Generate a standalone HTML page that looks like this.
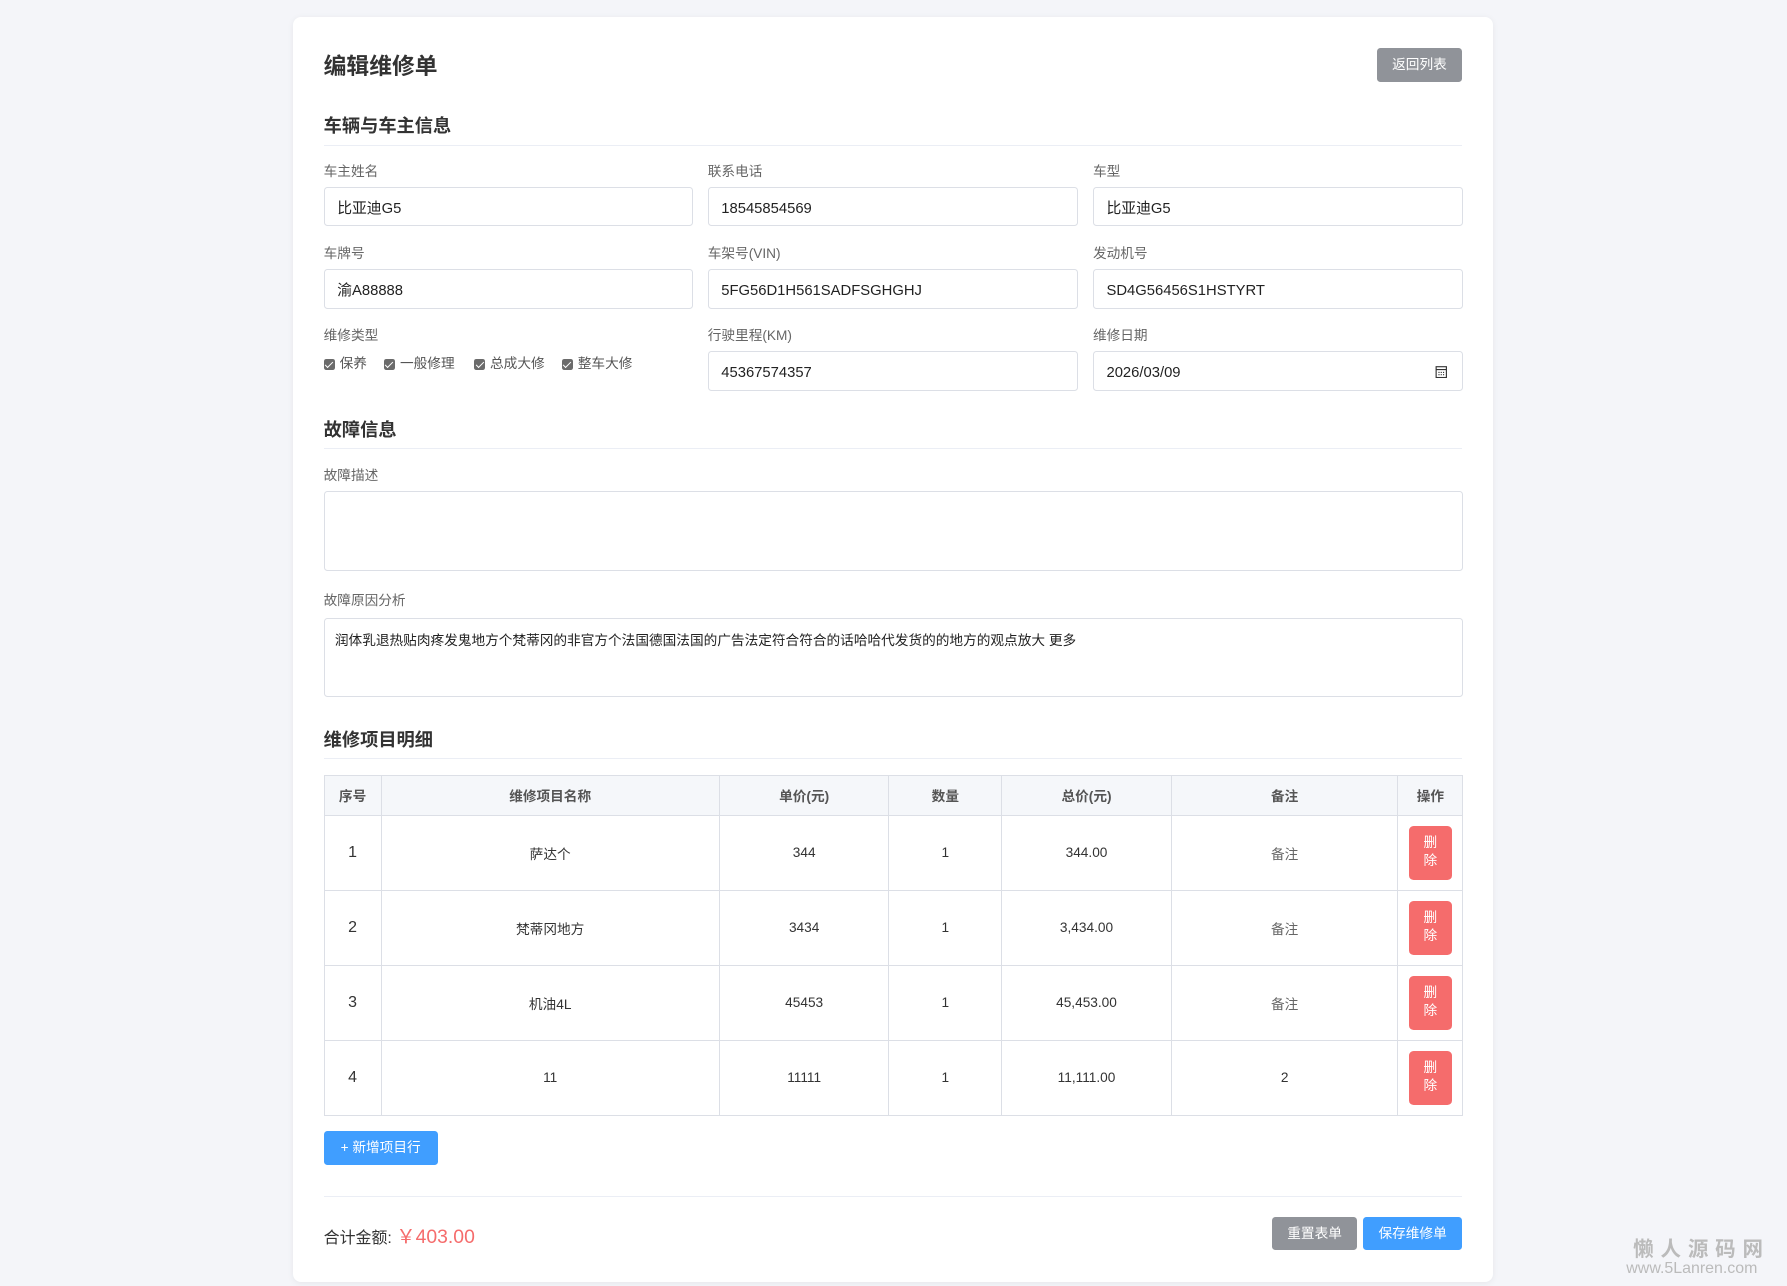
<!DOCTYPE html>
<html><head><meta charset="utf-8">
<style>
html,body{margin:0;padding:0;background:#f4f5f9;}
body{width:1787px;height:1285px;overflow:hidden;font-family:"Liberation Sans","Noto Sans CJK SC",sans-serif;}
#w{zoom:1.13967;position:relative;width:1568px;height:1128px;}
.a{position:absolute;}
.card{left:257px;top:15px;width:1053px;height:1110px;background:#fff;border-radius:7px;box-shadow:0 1px 6px rgba(0,0,0,.06);}
.title{font-size:20px;font-weight:bold;color:#333;}
.h{font-size:16px;font-weight:bold;color:#333;}
.line{height:1px;background:#ebeef5;left:284px;width:999px;}
.lab{font-size:12px;color:#666;}
.inp{height:33px;border:1px solid #dcdfe6;border-radius:3px;font-size:13px;color:#222;line-height:37px;padding-left:11px;box-sizing:content-box;}
.btn{color:#fff;font-size:12px;text-align:center;border-radius:3px;}
.cb{display:inline-block;width:10px;height:10px;background:#6b6b6b;border-radius:2px;vertical-align:-2px;margin-right:4px;position:relative;}
.cb:after{content:"";position:absolute;left:3px;top:1px;width:3px;height:6px;border:solid #fff;border-width:0 1.5px 1.5px 0;transform:rotate(45deg);}
.chk{font-size:12px;color:#555;}
table{border-collapse:collapse;font-size:12px;color:#333;}
td,th{border:1px solid #dcdfe6;text-align:center;padding:0;}
th{background:#f5f7fa;height:34px;color:#555;font-weight:bold;}
td{height:65px;}
.n{font-size:14px;}
.del{display:inline-block;width:38px;height:47px;background:#f56c6c;color:#fff;border-radius:4px;font-size:12px;line-height:16px;padding-top:7px;box-sizing:border-box;vertical-align:middle;}
.ta{border:1px solid #dcdfe6;border-radius:3px;left:284px;width:998px;height:68px;font-size:12px;color:#222;box-sizing:content-box;}
</style></head><body><div id="w">
<div class="a card"></div>
<div class="a title" style="left:284px;top:42px;">编辑维修单</div>
<div class="a btn" style="left:1208px;top:42px;width:75px;height:30px;line-height:30px;background:#909399;">返回列表</div>

<div class="a h" style="left:284px;top:98px;">车辆与车主信息</div>
<div class="a line" style="top:127px;"></div>

<div class="a lab" style="left:284px;top:140px;">车主姓名</div>
<div class="a lab" style="left:621px;top:140px;">联系电话</div>
<div class="a lab" style="left:959px;top:140px;">车型</div>
<div class="a inp" style="left:284px;top:164px;width:311px;">比亚迪G5</div>
<div class="a inp" style="left:621px;top:164px;width:312px;">18545854569</div>
<div class="a inp" style="left:959px;top:164px;width:312px;">比亚迪G5</div>

<div class="a lab" style="left:284px;top:212px;">车牌号</div>
<div class="a lab" style="left:621px;top:212px;">车架号(VIN)</div>
<div class="a lab" style="left:959px;top:212px;">发动机号</div>
<div class="a inp" style="left:284px;top:236px;width:311px;">渝A88888</div>
<div class="a inp" style="left:621px;top:236px;width:312px;">5FG56D1H561SADFSGHGHJ</div>
<div class="a inp" style="left:959px;top:236px;width:312px;">SD4G56456S1HSTYRT</div>

<div class="a lab" style="left:284px;top:284px;">维修类型</div>
<div class="a chk" style="left:284px;top:309px;"><span class="cb"></span>保养</div>
<div class="a chk" style="left:337px;top:309px;"><span class="cb"></span>一般修理</div>
<div class="a chk" style="left:416px;top:309px;"><span class="cb"></span>总成大修</div>
<div class="a chk" style="left:493px;top:309px;"><span class="cb"></span>整车大修</div>
<div class="a lab" style="left:621px;top:284px;">行驶里程(KM)</div>
<div class="a lab" style="left:959px;top:284px;">维修日期</div>
<div class="a inp" style="left:621px;top:308px;width:312px;">45367574357</div>
<div class="a inp" style="left:959px;top:308px;width:312px;">2026/03/09</div>
<svg class="a" style="left:1259px;top:320px;" width="11" height="12" viewBox="0 0 11 12"><rect x="1" y="1.5" width="9" height="9.5" fill="none" stroke="#333" stroke-width="1"/><line x1="1" y1="4" x2="10" y2="4" stroke="#333"/><rect x="3" y="6" width="1" height="1" fill="#333"/><rect x="5" y="6" width="1" height="1" fill="#333"/><rect x="7" y="6" width="1" height="1" fill="#333"/><rect x="3" y="8" width="1" height="1" fill="#333"/><rect x="5" y="8" width="1" height="1" fill="#333"/><rect x="7" y="8" width="1" height="1" fill="#333"/></svg>

<div class="a h" style="left:284px;top:365px;">故障信息</div>
<div class="a line" style="top:393px;"></div>
<div class="a lab" style="left:284px;top:407px;">故障描述</div>
<div class="a ta" style="top:431px;"></div>
<div class="a lab" style="left:284px;top:517px;">故障原因分析</div>
<div class="a ta" style="top:542px;padding:0;"><div style="padding:9px 9px;">润体乳退热贴肉疼发鬼地方个梵蒂冈的非官方个法国德国法国的广告法定符合符合的话哈哈代发货的的地方的观点放大 更多</div></div>

<div class="a h" style="left:284px;top:637px;">维修项目明细</div>
<div class="a line" style="top:665px;"></div>

<table class="a" style="left:284px;top:680px;width:1000px;">
<tr><th style="width:49px">序号</th><th style="width:296px">维修项目名称</th><th style="width:148px">单价(元)</th><th style="width:98px">数量</th><th style="width:148px">总价(元)</th><th style="width:198px">备注</th><th>操作</th></tr>
<tr><td class="n">1</td><td>萨达个</td><td>344</td><td>1</td><td>344.00</td><td style="color:#666">备注</td><td><span class="del">删<br>除</span></td></tr>
<tr><td class="n">2</td><td>梵蒂冈地方</td><td>3434</td><td>1</td><td>3,434.00</td><td style="color:#666">备注</td><td><span class="del">删<br>除</span></td></tr>
<tr><td class="n">3</td><td>机油4L</td><td>45453</td><td>1</td><td>45,453.00</td><td style="color:#666">备注</td><td><span class="del">删<br>除</span></td></tr>
<tr><td class="n">4</td><td>11</td><td>11111</td><td>1</td><td>11,111.00</td><td>2</td><td><span class="del">删<br>除</span></td></tr>
</table>

<div class="a btn" style="left:284px;top:992px;width:100px;height:30px;line-height:30px;background:#409eff;">+ 新增项目行</div>
<div class="a line" style="top:1049px;"></div>
<div class="a" style="left:284px;top:1071px;font-size:14px;color:#333;">合计金额: <span style="color:#f56c6c;font-size:17px;">￥403.00</span></div>
<div class="a btn" style="left:1116px;top:1068px;width:75px;height:29px;line-height:29px;background:#909399;">重置表单</div>
<div class="a btn" style="left:1196px;top:1068px;width:87px;height:29px;line-height:29px;background:#409eff;">保存维修单</div>

<div class="a" style="left:1433px;top:1081px;font-size:18px;font-weight:bold;color:#bbb;letter-spacing:6px;">懒人源码网</div>
<div class="a" style="left:1427px;top:1106px;font-size:14px;color:#bbb;">www.5Lanren.com</div>
</div></body></html>
